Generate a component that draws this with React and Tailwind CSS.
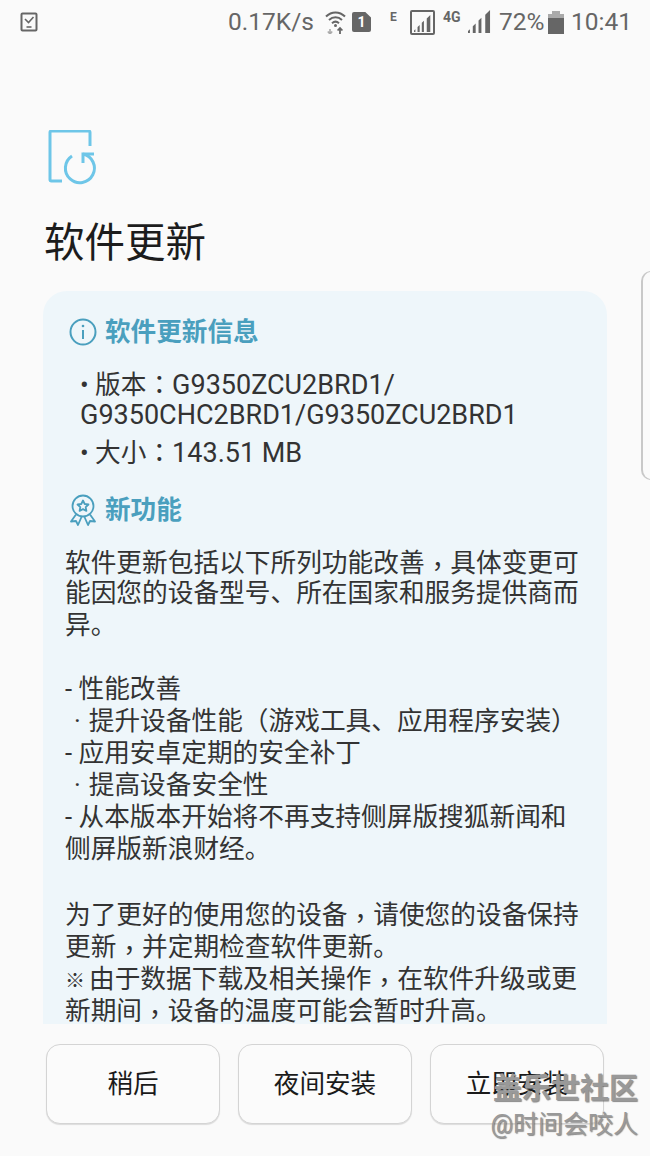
const CJK_FONT = 'font-["Roboto","Noto_Sans_CJK_SC",sans-serif]';

function TaskIcon() {
  return (
    <svg className="shrink-0" width="18" height="20" viewBox="0 0 18 20" fill="none" stroke="#666" strokeWidth="2">
      <rect x="1.5" y="1.5" width="15" height="17" rx="1" />
      <path d="M5 7l3.5 3.5L13.5 5" strokeWidth="1.6" />
      <path d="M6.5 15h5" strokeWidth="1.6" />
    </svg>
  );
}

function WifiIcon() {
  return (
    <svg width="21" height="24" viewBox="0 0 21 24" fill="none" stroke="#666">
      <path d="M1 6.5C6.5 1 14.5 1 20 6.5" strokeWidth="2" />
      <path d="M4 10c3.8-3.6 9.2-3.6 13 0" strokeWidth="2" />
      <path d="M7 13.2c2.2-2 4.8-2 7 0" strokeWidth="2" />
      <circle cx="10.5" cy="15.5" r="1.5" fill="#666" stroke="none" />
      <path d="M5 19v5M2.8 21.5L5 24l2.2-2.5" stroke="#aaa" strokeWidth="1.6" />
      <path d="M15 24v-6M12.6 20.5L15 18l2.4 2.5" strokeWidth="1.8" />
    </svg>
  );
}

function SimIcon() {
  return (
    <div className="w-[19px] h-[20px] bg-[#666] rounded-[2px] flex items-center justify-center text-white text-[14px] leading-none font-bold [clip-path:polygon(0_0,70%_0,100%_28%,100%_100%,0_100%)]">
      1
    </div>
  );
}

function Bars({ size }) {
  return (
    <svg width={size} height={size} viewBox="0 0 24 24" fill="#666">
      <path d="M0 24v-2l2-2v4zM5 24v-7l3-3v10zM11 24v-13l3-3v16zM18 24V5l5-5v24z" />
    </svg>
  );
}

function StatusBar() {
  return (
    <div className="h-[44px] flex items-center pl-[20px] text-[#666] text-[24.5px]">
      <TaskIcon />
      <span className="ml-[190px] w-[84px] shrink-0 whitespace-nowrap">0.17K/s</span>
      <div className="ml-[13px] shrink-0"><WifiIcon /></div>
      <div className="ml-[6px] shrink-0"><SimIcon /></div>
      <span className="ml-[19px] w-[8px] shrink-0 mb-[11px] text-[12px] font-bold leading-none">E</span>
      <div className="ml-[12px] shrink-0 w-[25px] h-[25px] border-2 border-[#666] rounded-[2px] flex items-end justify-center pb-[1px]">
        <Bars size={17} />
      </div>
      <span className="ml-[8px] w-[17px] shrink-0 mb-[11px] text-[14px] font-bold leading-none whitespace-nowrap">4G</span>
      <div className="ml-[8px] shrink-0 mb-[1px]"><Bars size={23} /></div>
      <span className="ml-[8px] w-[43px] shrink-0 whitespace-nowrap">72%</span>
      <svg className="ml-[6px] shrink-0" width="16" height="23" viewBox="0 0 16 23" fill="#666">
        <path d="M4 0h8v3h4v4H0V3h4z" fill="#aaa" />
        <path d="M0 7h16v16H0z" />
      </svg>
      <span className="ml-[7px] shrink-0 whitespace-nowrap">10:41</span>
    </div>
  );
}

function UpdateIcon() {
  return (
    <svg width="50" height="56" viewBox="0 0 50 56" fill="none" stroke="#6ec6e8" strokeWidth="3">
      <path d="M14 51H3.500A1.500 1.500 0 0 1 2 49.500V2.500A1.500 1.500 0 0 1 3.500 1h37A1.500 1.500 0 0 1 42 2.500V16" />
      <path d="M24 26A14.500 14.500 0 1 0 35 24" />
      <path d="M46 24H35v9" />
    </svg>
  );
}

function InfoIcon() {
  return (
    <svg width="28" height="28" viewBox="0 0 28 28" fill="none" stroke="#4a9fbe" strokeWidth="2">
      <circle cx="14" cy="14" r="12.500" />
      <path d="M14 12v9" />
      <circle cx="14" cy="8" r="1.300" fill="#4a9fbe" stroke="none" />
    </svg>
  );
}

function MedalIcon() {
  return (
    <svg width="28" height="32" viewBox="0 0 28 32" fill="none" stroke="#4a9fbe" strokeWidth="1.800" strokeLinejoin="round">
      <circle cx="14" cy="12" r="10.500" />
      <path d="M14 6.500l1.700 3.500 3.800 0.500-2.800 2.600 0.700 3.800-3.400-1.800-3.400 1.800 0.700-3.800-2.800-2.600 3.800-0.500z" />
      <path d="M7 20.500L2 27.500l5-0.500 2 4 3.500-8" />
      <path d="M21 20.500l5 7-5-0.500-2 4-3.500-8" />
    </svg>
  );
}

// colon and comma sit centred in the cell on this device font
function Colon() {
  return <span className='font-["Noto_Sans_CJK_TC",sans-serif]'>：</span>;
}

function Comma() {
  return <span className='inline-block translate-y-[4px] font-["Noto_Sans_CJK_TC",sans-serif]'>，</span>;
}

function Latin({ children }) {
  return <span className="text-[27px]">{children}</span>;
}

function Line({ children }) {
  return <div className="h-[32px]">{children}</div>;
}

function Dotted({ children }) {
  return <Line><span className="ml-[9px] mr-[8px]">·</span>{children}</Line>;
}

function Button({ label }) {
  return (
    <button className="w-[174px] h-[80px] rounded-[14px] border border-[#d4d4d4] shadow-[0_1px_1px_rgba(0,0,0,0.12)] bg-[#fbfbfb] text-[25.6px] text-[#1a1a1a]">
      {label}
    </button>
  );
}

export default function App() {
  return (
    <div className={`relative w-[650px] h-[1156px] overflow-hidden bg-[#fafafa] ${CJK_FONT}`}>
      <StatusBar />

      <div className="ml-[48px] mt-[86px]"><UpdateIcon /></div>
      <h1 className="ml-[44px] mt-[29px] text-[40.5px] leading-[56px] text-[#1c1c1c]">软件更新</h1>

      <div className="ml-[43px] mt-[20px] w-[564px] h-[733px] overflow-hidden bg-[#eef6fa] rounded-t-[24px] pt-[25px] pl-[22px] text-[25.7px] leading-[32px] text-[#333] whitespace-nowrap">
        <div className="flex items-center gap-[8px] pl-[4px] h-[32px]">
          <InfoIcon />
          <span className="font-bold text-[25.6px] text-[#4a9fbe]">软件更新信息</span>
        </div>

        <div className="mt-[19px] ml-[15px]">
          <Line>• 版本<Colon /><Latin>G9350ZCU2BRD1/</Latin></Line>
          <Line><Latin>G9350CHC2BRD1/G9350ZCU2BRD1</Latin></Line>
          <div className="h-[32px] mt-[4px]">• 大小<Colon /><Latin>143.51 MB</Latin></div>
        </div>

        <div className="mt-[27px] flex items-center gap-[8px] pl-[4px] h-[32px]">
          <MedalIcon />
          <span className="font-bold text-[25.6px] text-[#4a9fbe]">新功能</span>
        </div>

        <div className="mt-[19px]">
          <Line>软件更新包括以下所列功能改善<Comma />具体变更可</Line>
          <Line>能因您的设备型号、所在国家和服务提供商而</Line>
          <Line>异。</Line>
          <div className="h-[32px]" />
          <Line>- 性能改善</Line>
          <Dotted>提升设备性能（游戏工具、应用程序安装）</Dotted>
          <Line>- 应用安卓定期的安全补丁</Line>
          <Dotted>提高设备安全性</Dotted>
          <Line>- 从本版本开始将不再支持侧屏版搜狐新闻和</Line>
          <Line>侧屏版新浪财经。</Line>
          <div className="h-[32px]" />
          <Line>为了更好的使用您的设备<Comma />请使您的设备保持</Line>
          <Line>更新<Comma />并定期检查软件更新。</Line>
          <Line><span className="inline-block w-[24px] text-[20px] font-bold">※</span>由于数据下载及相关操作<Comma />在软件升级或更</Line>
          <Line>新期间<Comma />设备的温度可能会暂时升高。</Line>
        </div>
      </div>

      <div className="ml-[46px] mt-[20px] flex gap-[18px]">
        <Button label="稍后" />
        <Button label="夜间安装" />
        <Button label="立即安装" />
      </div>

      {/* edge panel handle */}
      <div className="absolute left-[641px] top-[271px] w-[12px] h-[209px] border-l-2 border-t border-b border-[#c8c8c8] rounded-l-[10px]" />

      {/* watermark over the screenshot */}
      <div className="absolute right-[12px] top-[1073px] text-right text-[#999] [text-shadow:1px_1px_1px_rgba(60,60,60,0.6)]">
        <div className="text-[29px] leading-[32px] font-bold">盖乐世社区</div>
        <div className="text-[25px] leading-[32px] mt-[4px]">@时间会咬人</div>
      </div>
    </div>
  );
}
